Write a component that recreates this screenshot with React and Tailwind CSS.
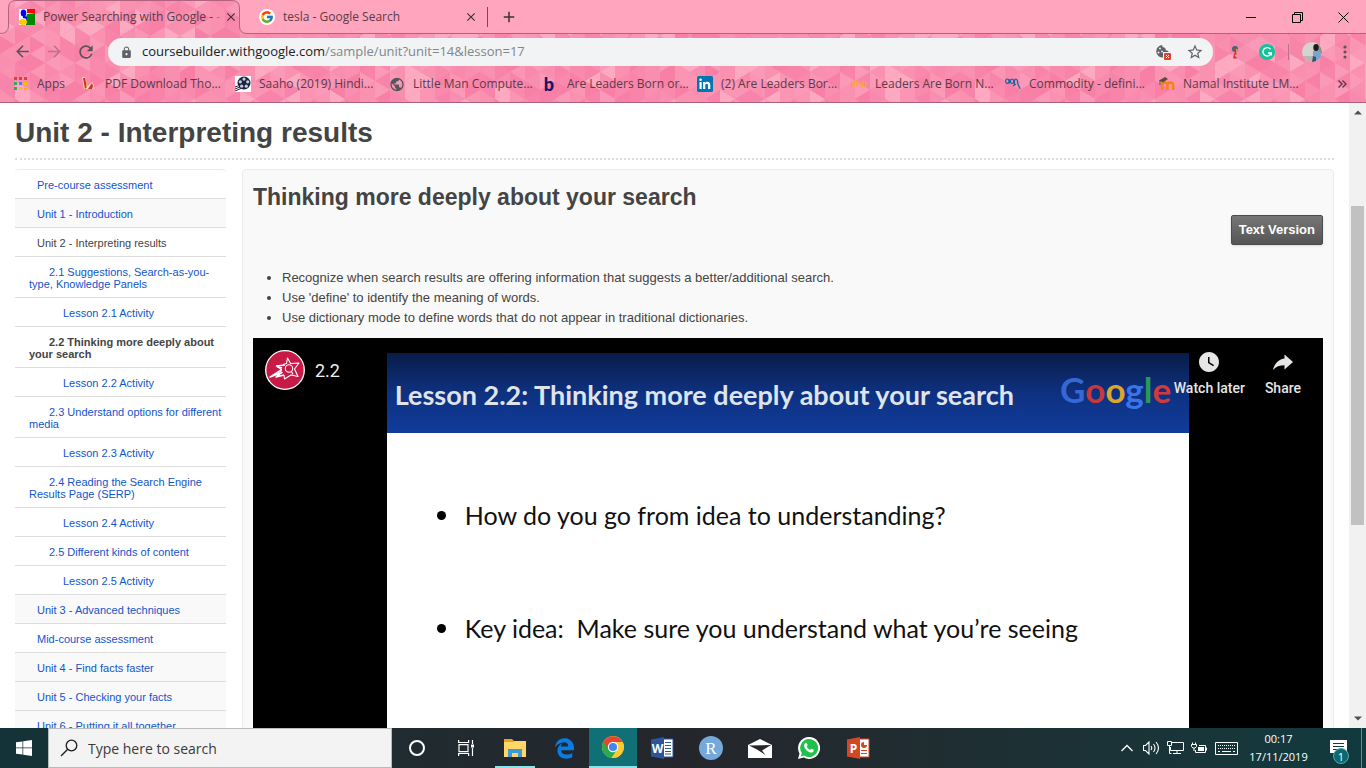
import React from "react";
import { FcGoogle } from "react-icons/fc";
import { FaEdgeLegacy } from "react-icons/fa6";
import { MdArrowBack, MdArrowForward, MdRefresh, MdLock, MdStarBorder, MdPublic, MdWatchLater, MdClose, MdAdd } from "react-icons/md";

const UI = "font-['Open_Sans','Noto_Sans',sans-serif]";

/* ---------- browser theme backdrop ---------- */

const SHADES = ["#f98fb0", "#f884aa", "#fb9ab8", "#f98aad", "#fb95b4", "#fca9c1", "#f87fa6", "#fa91b1"];

function themeTriangles() {
  const list = [];
  let seed = 7;
  const next = () => {
    seed = (seed * 1103515245 + 12345) % 2147483648;
    return SHADES[Math.floor((seed / 2147483648) * SHADES.length)];
  };
  for (let c = 0; c < 32; c++) {
    const x = c * 15;
    const shift = c % 2 ? -9 : 0;
    for (let r = -1; r < 8; r++) {
      const y = r * 18 + shift;
      list.push({ d: `M${x} ${y}L${x + 15} ${y + 9}L${x} ${y + 18}Z`, fill: next() });
      list.push({ d: `M${x + 15} ${y + 9}L${x} ${y + 18}L${x + 15} ${y + 27}Z`, fill: next() });
    }
  }
  return list;
}
const TRIANGLES = themeTriangles();

function ThemeBackdrop() {
  return (
    <svg className="absolute inset-0 h-full w-full" aria-hidden="true">
      <defs>
        <pattern id="tri" width="480" height="110" patternUnits="userSpaceOnUse">
          <rect width="480" height="110" fill="#f98bad" />
          {TRIANGLES.map((t, i) => (
            <path key={i} d={t.d} fill={t.fill} />
          ))}
        </pattern>
      </defs>
      <rect width="100%" height="100%" fill="url(#tri)" />
      <path
        d="M-2 -2H6000V33.500H247Q239.500 33.500 239.500 26V8Q239.500 0.500 232 0.500H16Q8.500 0.500 8.500 8V26Q8.500 33.500 0 33.500H-2Z"
        fill="#ffa6be"
        stroke="#b3627f"
      />
    </svg>
  );
}

/* ---------- small icons ---------- */

const OldGoogleIcon = () => (
  <svg width="16" height="16" viewBox="0 0 16 16">
    <path fill="#fff" d="M0 0h16v16H0z" />
    <path fill="#f00" d="M8 0h8v4H8z" />
    <path fill="#080" d="M8 5l8-1v12H7V8z" />
    <ellipse cx="4.500" cy="4" rx="2.800" ry="3.600" fill="#00f" />
    <path fill="#00f" d="M4 6l4 2v2L4 9z" />
    <ellipse cx="4" cy="13" rx="4" ry="3" fill="#fc0" />
  </svg>
);

const AppsIcon = () => (
  <svg width="16" height="16" viewBox="0 0 16 16">
    {["#e0403a", "#e0403a", "#e0403a", "#34a853", "#4285f4", "#fbbc05", "#34a853", "#fbbc05", "#fbbc05"].map((c, i) => (
      <rect key={i} x={1 + (i % 3) * 5} y={1 + Math.floor(i / 3) * 5} width="3" height="3" fill={c} />
    ))}
  </svg>
);

const PdfIcon = () => (
  <svg width="16" height="16" viewBox="0 0 16 16">
    <path d="M1 1l3 0 3 9 4-4 2 3-1 5-9 0z" fill="#f7cfc2" />
    <path d="M2 2l2 0 2 9-2 2zM7 13l4-6 1 3-1 3z" fill="#c9372c" />
    <path d="M5 5l2 4-2 3zM3 13h9v1H3z" fill="#e8a13a" />
  </svg>
);

const ReelIcon = () => (
  <svg width="16" height="16" viewBox="0 0 16 16">
    <path fill="#fff" d="M0 0h16v16H0z" />
    <circle cx="9" cy="7" r="6.500" fill="#1c2340" />
    <g fill="#c9cede">
      <circle cx="9" cy="3.100" r="1.600" />
      <circle cx="12.700" cy="5.800" r="1.600" />
      <circle cx="11.300" cy="10.200" r="1.600" />
      <circle cx="6.700" cy="10.200" r="1.600" />
      <circle cx="5.300" cy="5.800" r="1.600" />
    </g>
    <path d="M0 15l7-3M0 13l5-2M0 11l3-1" stroke="#1c2340" />
  </svg>
);

const LinkedInIcon = () => (
  <svg width="16" height="16" viewBox="0 0 16 16">
    <rect width="16" height="16" rx="1.500" fill="#0077b5" />
    <path d="M2.500 6h2.200v7H2.500zM6 6h2.200v1c.4-.7 1.200-1.200 2.300-1.200 2 0 2.800 1.300 2.800 3.300V13H11V9.500c0-1-.3-1.700-1.200-1.700S8.300 8.500 8.300 9.500V13H6z" fill="#fff" />
    <circle cx="3.600" cy="3.700" r="1.300" fill="#fff" />
  </svg>
);

const VocabIcon = () => (
  <svg width="17" height="16" viewBox="0 0 17 16" fill="none" stroke="#1565a8" strokeWidth="1.300">
    <ellipse cx="2.500" cy="5" rx="1.800" ry="2.300" />
    <ellipse cx="7.500" cy="5" rx="1.800" ry="2.300" />
    <path d="M4.700 3v4.500M10 8.500V5q.5-2.500 2-2t1.500 4.500l2.500 5.500M8.500 10l3-2" />
  </svg>
);

const MoodleIcon = () => (
  <svg width="16" height="16" viewBox="0 0 16 16">
    <path d="M3.200 14V9q0-2.500 2.500-2.500T8.500 9v5M8.500 14V9q0-2.500 2.800-2.500T14.200 9v5" fill="none" stroke="#f98012" strokeWidth="2.400" />
    <path d="M0 4.500l6-3.500 3 2-5 3.500z" fill="#5b4a3e" />
    <path d="M1 4v5" stroke="#5b4a3e" />
  </svg>
);

const CookieIcon = () => (
  <svg width="17" height="16" viewBox="0 0 17 16">
    <path d="M7 1A6.300 6.300 0 1 0 8 13.600V8h5.500q0-1.500-1.500-1.500T10.500 5 9 3.500 7 1z" fill="#5f6368" />
    <g fill="#f1f3f4">
      <circle cx="5" cy="4.500" r="1" />
      <circle cx="3.500" cy="8.500" r="1" />
      <circle cx="7" cy="7.500" r=".9" />
    </g>
    <rect x="9" y="9" width="7" height="7" rx="1" fill="#db4437" />
    <path d="M11 11l3 3M14 11l-3 3" stroke="#fff" />
  </svg>
);

const TrophyIcon = () => (
  <svg width="16" height="16" viewBox="0 0 16 16">
    <circle cx="8" cy="5" r="3" fill="#1f6f8b" />
    <path d="M6 3.500h2.500v3H6z" fill="#c9372c" />
    <path d="M8 7.500l2 2-2.500 2 3 3H6l1-4z" fill="#c9372c" />
    <path d="M9 4.500l2 1-2 3z" fill="#d9a441" />
  </svg>
);

const GrammarlyIcon = () => (
  <svg width="16" height="16" viewBox="0 0 16 16">
    <circle cx="8" cy="8" r="8" fill="#15c39a" />
    <path d="M11.500 5.200A4.200 4.200 0 1 0 12.200 9H9M12.300 8.500v3" fill="none" stroke="#fff" strokeWidth="1.400" />
  </svg>
);

const AvatarIcon = () => (
  <svg width="20" height="20" viewBox="0 0 20 20">
    <defs>
      <clipPath id="av">
        <circle cx="10" cy="10" r="10" />
      </clipPath>
    </defs>
    <g clipPath="url(#av)">
      <path d="M0 0h20v20H0z" fill="#d5d3cf" />
      <path d="M15 0h5v12h-5z" fill="#8b9687" />
      <path d="M0 14h12v6H0z" fill="#b9b6b2" />
      <path d="M11 9l5-1 3 3v9h-8z" fill="#7ea3cf" />
      <path d="M11 14l3 1v5h-4z" fill="#39506f" />
      <ellipse cx="14" cy="5.500" rx="2.700" ry="3.600" fill="#1d1a1c" />
    </g>
  </svg>
);

const BadgeStar = () => (
  <svg width="40" height="40" viewBox="0 0 40 40">
    <circle cx="20" cy="20" r="19.300" fill="#c81a46" stroke="#fff" strokeWidth="1.300" />
    <g fill="none" stroke="#fff" strokeWidth="1.100" strokeLinejoin="round">
      <path d="M18 14.500l3.500-1L22.500 8l3 5.500 8.500-.5-4.500 6 3.500 7.500-7-1.500-6.500 4-.5-4" />
      <circle cx="24" cy="18.500" r="3.700" />
      <path d="M26.500 21.500l1.500 3" />
      <path d="M20 15l-8.500 1 5 3.500L5 27l12-4.500-6 4.500 8-2" strokeWidth="1.400" />
      <path d="M12 16.500l5 1.500M8 25.500l9-5" strokeWidth="1.400" />
    </g>
  </svg>
);

const WindowsIcon = () => (
  <svg width="16" height="16" viewBox="0 0 16 16" fill="#fff">
    <path d="M0 2.300l6.500-.9v6.200H0zM7.200 1.300L16 0v7.600H7.200zM0 8.300h6.500v6.300L0 13.700zM7.200 8.300H16V16l-8.800-1.200z" />
  </svg>
);

const TaskViewIcon = () => (
  <svg width="18" height="16" viewBox="0 0 18 16" fill="none" stroke="#fff" strokeWidth="1.200">
    <path d="M2 4.600h9v7H2zM1.600 0v2.500h10V0M1.600 16v-2.500h10V16M15.500 0v4M15.500 8v8" />
    <path d="M14 4.500h3v3h-3z" fill="#fff" stroke="none" />
  </svg>
);

const FolderIcon = () => (
  <svg width="22" height="18" viewBox="0 0 22 18">
    <path d="M0 0h8l2 2h11v4H0z" fill="#e3a61b" />
    <path d="M0 3h9l2-1h11v16H0z" fill="#ffd766" />
    <path d="M4 10h14v8h-4v-4H8v4H4z" fill="#3f98d8" />
  </svg>
);

const ChromeIcon = () => (
  <svg width="22" height="22" viewBox="0 0 22 22">
    <circle cx="11" cy="11" r="11" fill="#fbc116" />
    <path d="M11 11L1.500 5.500A11 11 0 0 0 9.500 21.900L15.500 13z" fill="#2da94f" />
    <path d="M1.500 5.500A11 11 0 0 1 20.600 5.900H11L6.200 13.500z" fill="#ea4335" />
    <path d="M11 5.900h9.600A11 11 0 0 1 9.500 21.900l6-8.500z" fill="#fcc934" />
    <circle cx="11" cy="11" r="5.200" fill="#fff" />
    <circle cx="11" cy="11" r="4.100" fill="#4285f4" />
  </svg>
);

const OfficeIcon = ({ color, letter, children }) => (
  <svg width="23" height="22" viewBox="0 0 23 22">
    <path d="M12 2h10v18H12z" fill="#fff" stroke={color} />
    {children}
    <path d="M0 2.500L13 0v22L0 19.500z" fill={color} />
    <text x="6.500" y="15.500" textAnchor="middle" fontSize="12" fontWeight="700" fill="#fff" fontFamily="Open Sans">
      {letter}
    </text>
  </svg>
);

const MailIcon = () => (
  <svg width="24" height="19" viewBox="0 0 24 19">
    <path d="M0 6L12 0l12 6v13H0z" fill="#fff" />
    <path d="M1 6.500l22-.5-9 5.500 3.500 4.500L9 10.500z" fill="#24262a" />
  </svg>
);

const WhatsAppIcon = () => (
  <svg width="22" height="22" viewBox="0 0 22 22">
    <path d="M11 0a11 11 0 1 1-5.300 20.600L0 22l1.500-5.500A11 11 0 0 1 11 0z" fill="#fff" />
    <path d="M11 2a9 9 0 1 1-4.700 16.600L2.800 19.500l1-3.400A9 9 0 0 1 11 2z" fill="#1fc14b" />
    <path d="M7.700 5.800c.6-.2 1 0 1.200.6l.7 1.700c0 .6-.8 1-.9 1.500.7 1.500 1.900 2.600 3.400 3.200.5-.2 1-1.200 1.500-1.100l2 1c.5.600 0 2-.9 2.500-1.500.8-3.500.1-5-.9C8 13 6.300 10.800 6.100 9c0-1.300.7-2.700 1.600-3.200z" fill="#fff" />
  </svg>
);

/* ---------- browser chrome ---------- */

function Tab({ icon, children, active }) {
  return (
    <div className={active ? "flex h-full w-[240px] shrink-0 items-center pl-[19px]" : "flex h-full w-[247px] shrink-0 items-center pr-[7px] pl-[19px]"}>
      <span className="flex w-6 shrink-0">{icon}</span>
      <button className="min-w-0 flex-1 overflow-hidden text-left whitespace-nowrap">{children}</button>
      <button aria-label="Close tab" className="flex w-[18px] justify-center text-[#3d3337]">
        <MdClose size={14} />
      </button>
    </div>
  );
}

const BOOKMARKS = [
  ["PDF Download Tho...", <PdfIcon />],
  ["Saaho (2019) Hindi...", <ReelIcon />],
  ["Little Man Compute...", <MdPublic size={17} color="#54565b" />],
  ["Are Leaders Born or...", <span className="pr-1 font-['Lato',sans-serif] text-lg leading-none font-black text-[#1b1464]">b</span>],
  ["(2) Are Leaders Bor...", <LinkedInIcon />],
  ["Leaders Are Born N...", <span className="text-[8px] font-bold text-[#f9a63a]">PhD</span>],
  ["Commodity - defini...", <VocabIcon />],
  ["Namal Institute LM...", <MoodleIcon />],
];

function BrowserHeader() {
  return (
    <header className={`relative h-[103px] shrink-0 overflow-hidden border-b border-[#a8607b] ${UI}`}>
      <ThemeBackdrop />
      <div className="relative flex h-full flex-col">
        <div className="flex h-[34px] items-center text-[12px] text-[#5b3b47]">
          <Tab active icon={<OldGoogleIcon />}>
            Power Searching with Google - <span className="opacity-40">-</span>
          </Tab>
          <Tab
            icon={
              <span className="flex h-4 w-4 items-center justify-center rounded-full bg-white">
                <FcGoogle size={14} />
              </span>
            }
          >
            tesla - Google Search
          </Tab>
          <span className="h-5 w-px bg-[#7d4659]" />
          <button aria-label="New tab" className="ml-3 text-[#3d3337]">
            <MdAdd size={18} />
          </button>
          <div className="ml-auto flex h-7 text-black">
            <button aria-label="Minimize" className="flex w-[46px] items-center justify-center">
              <svg width="10" height="10" stroke="currentColor"><path d="M0 5.500h10" /></svg>
            </button>
            <button aria-label="Restore" className="flex w-[46px] items-center justify-center">
              <svg width="11" height="11" fill="none" stroke="currentColor"><path d="M.5 2.500h8v8h-8zM2.500 2.500v-2h8v8h-2" /></svg>
            </button>
            <button aria-label="Close" className="flex w-[46px] items-center justify-center">
              <svg width="11" height="11" stroke="currentColor"><path d="M.5 .5l10 10M10.500 .5l-10 10" /></svg>
            </button>
          </div>
        </div>

        <div className="flex h-9 items-center">
          <div className="flex w-[108px] shrink-0 pl-[6px] text-[#5b5358]">
            <button aria-label="Back" className="flex w-8 justify-center"><MdArrowBack size={19} /></button>
            <button aria-label="Forward" className="flex w-8 justify-center text-[#c0708c]"><MdArrowForward size={19} /></button>
            <button aria-label="Reload" className="flex w-8 justify-center"><MdRefresh size={20} /></button>
          </div>
          <div className="flex h-7 min-w-0 flex-1 items-center rounded-full bg-[#f1f3f4] pr-[9px] pl-3 text-[#5f6368]">
            <MdLock size={13} />
            <div className="ml-[9px] flex-1 text-[13px] whitespace-nowrap" role="textbox" aria-label="Address">
              <span className="text-[#202124]">coursebuilder.withgoogle.com</span>
              <span className="text-[#80868b]">/sample/unit?unit=14&amp;lesson=17</span>
            </div>
            <button aria-label="Cookies blocked" className="mr-[14px]"><CookieIcon /></button>
            <button aria-label="Bookmark this tab"><MdStarBorder size={18} /></button>
          </div>
          <div className="flex w-[153px] shrink-0 items-center pl-[14px]">
            <button aria-label="Extension" className="mr-4"><TrophyIcon /></button>
            <button aria-label="Grammarly"><GrammarlyIcon /></button>
            <span className="mx-[13px] h-4 w-px bg-[#c0708c]" />
            <button aria-label="Profile"><AvatarIcon /></button>
            <button aria-label="Menu" className="ml-[21px]">
              <svg width="4" height="14" fill="#5b5358"><circle cx="2" cy="2" r="1.600" /><circle cx="2" cy="7" r="1.600" /><circle cx="2" cy="12" r="1.600" /></svg>
            </button>
          </div>
        </div>

        <nav className="flex h-7 items-center pl-[13px] text-[12px] text-[#5b3b47]" aria-label="Bookmarks">
          <button className="flex w-[68px] shrink-0 items-center gap-2 whitespace-nowrap"><AppsIcon />Apps</button>
          {BOOKMARKS.map(([label, icon]) => (
            <a key={label} href="#bookmark" className="flex w-[154px] shrink-0 items-center gap-2 whitespace-nowrap">
              <span className="flex h-4 w-4 shrink-0 items-center justify-center">{icon}</span>
              {label}
            </a>
          ))}
          <button aria-label="More bookmarks" className="mr-[19px] ml-auto shrink-0">
            <svg width="9" height="8" fill="none" stroke="#5b3b47" strokeWidth="1.400"><path d="M.5 .5L4 4 .5 7.500M4.500 .5L8 4 4.500 7.500" /></svg>
          </button>
        </nav>
      </div>
    </header>
  );
}

/* ---------- course page ---------- */

const LESSONS = [
  ["Pre-course assessment", 1],
  ["Unit 1 - Introduction", 1, "shade"],
  ["Unit 2 - Interpreting results", 1, "current"],
  ["2.1 Suggestions, Search-as-you-type, Knowledge Panels", 2],
  ["Lesson 2.1 Activity", 3],
  ["2.2 Thinking more deeply about your search", 2, "bold"],
  ["Lesson 2.2 Activity", 3],
  ["2.3 Understand options for different media", 2],
  ["Lesson 2.3 Activity", 3],
  ["2.4 Reading the Search Engine Results Page (SERP)", 2],
  ["Lesson 2.4 Activity", 3],
  ["2.5 Different kinds of content", 2],
  ["Lesson 2.5 Activity", 3],
  ["Unit 3 - Advanced techniques", 1, "shade"],
  ["Mid-course assessment", 1],
  ["Unit 4 - Find facts faster", 1, "shade"],
  ["Unit 5 - Checking your facts", 1, "shade"],
  ["Unit 6 - Putting it all together", 1, "shade"],
];
const INDENT = { 1: "indent-2", 2: "indent-5", 3: "indent-[34px]" };
const TONE = {
  shade: "bg-[#f9f9f9] text-[#1155cc]",
  current: "text-[#444]",
  bold: "font-bold text-[#444]",
};

function Sidebar() {
  return (
    <nav aria-label="Course outline" className="w-[211px] shrink-0">
      <ul className="rounded border-t border-[#ebebeb] text-[11px] leading-3">
        {LESSONS.map(([label, level, tone]) => (
          <li key={label} className={`border-b border-[#ddd] pt-[9px] pr-1 pb-[7px] pl-[14px] ${INDENT[level]} ${TONE[tone] || "text-[#1155cc]"}`}>
            {tone === "current" || tone === "bold" ? label : <a href="#lesson">{label}</a>}
          </li>
        ))}
      </ul>
    </nav>
  );
}

function VideoPlayer() {
  return (
    <section aria-label="Lesson video" className="relative mt-[10px] aspect-video w-full overflow-hidden bg-black">
      <div className="mx-auto flex aspect-[4/3] h-full flex-col pt-[15px] font-['Lato',sans-serif]">
        <div className="flex h-20 items-center justify-between bg-gradient-to-b from-[#081c48] via-[#0e3180] to-[#113c9c] pt-1 pr-[18px] pl-2">
          <h3 className="text-[27px] leading-9 font-bold whitespace-nowrap text-[#dfe3ea]">Lesson 2.2: Thinking more deeply about your search</h3>
          <p aria-label="Google" className="pb-3 text-[35px] leading-10 font-bold whitespace-nowrap">
            <span className="text-[#3567d6]">G</span>
            <span className="text-[#c8373a]">o</span>
            <span className="text-[#dba72f]">o</span>
            <span className="text-[#3a74ea]">g</span>
            <span className="text-[#2c9a55]">l</span>
            <span className="text-[#d2393b]">e</span>
          </p>
        </div>
        <ul className="flex flex-1 flex-col gap-[77px] bg-white pt-16 pl-[50px] text-[25px] leading-9 text-[#111]">
          {["How do you go from idea to understanding?", "Key idea:\u00a0 Make sure you understand what you’re seeing"].map((t) => (
            <li key={t} className="flex items-center gap-[19px] whitespace-nowrap">
              <span className="h-[9px] w-[9px] rounded-full bg-black" />
              {t}
            </li>
          ))}
        </ul>
      </div>
      <div className="absolute top-3 left-3 flex items-center gap-[10px] font-['Roboto',sans-serif] text-[18px] text-[#eee]">
        <BadgeStar />
        <a href="#video">2.2</a>
      </div>
      <div className="absolute top-3 right-[22px] flex gap-5 font-['Roboto',sans-serif] text-[14px] leading-5 font-medium text-[#e6e6e6]">
        <button className="flex flex-col items-center gap-1">
          <MdWatchLater size={24} />
          Watch later
        </button>
        <button className="flex flex-col items-center gap-1">
          <svg width="24" height="24" viewBox="0 0 24 24" fill="currentColor">
            <path d="M13.500 8.500V4.500l8.500 7.500-8.500 7.500v-4.300c-5 0-8.500 1.300-11.500 4.800 1-5 4.500-10.500 11.500-11.500z" />
          </svg>
          Share
        </button>
      </div>
    </section>
  );
}

function CoursePage() {
  return (
    <main className="min-w-0 flex-1 overflow-hidden bg-white px-[15px] pt-3 font-['Liberation_Sans',Arial,sans-serif] text-[#444]">
      <h1 className="border-b-2 border-dotted border-[#ddd] pb-[7px] text-[28px] leading-9 font-bold">Unit 2 - Interpreting results</h1>
      <div className="mt-[9px] flex items-start gap-4">
        <Sidebar />
        <article className="min-w-0 flex-1 rounded border border-[#ebebeb] bg-[#f9f9f9] px-[10px] pt-[13px] pb-4">
          <h2 className="text-[23px] leading-7 font-bold">Thinking more deeply about your search</h2>
          <div className="mt-1 flex justify-end">
            <button className="h-[30px] rounded-[2px] border border-[#4c4c4c] bg-gradient-to-b from-[#777] to-[#555] px-[7px] text-[13px] font-bold text-white shadow-sm">
              Text Version
            </button>
          </div>
          <ul className="mt-[23px] list-disc pl-[29px] text-[13px] leading-5">
            <li>Recognize when search results are offering information that suggests a better/additional search.</li>
            <li>Use 'define' to identify the meaning of words.</li>
            <li>Use dictionary mode to define words that do not appear in traditional dictionaries.</li>
          </ul>
          <VideoPlayer />
        </article>
      </div>
    </main>
  );
}

function ScrollBar() {
  return (
    <div className="flex w-[17px] shrink-0 flex-col items-center bg-[#f1f1f1]" aria-hidden="true">
      <svg className="mt-[7px] shrink-0" width="8" height="5" fill="#505050"><path d="M0 4.500L4 .5l4 4z" /></svg>
      <div className="mt-[91px] h-[51%] w-[13px] bg-[#c1c1c1]" />
      <svg className="mt-auto mb-[7px] shrink-0" width="8" height="5" fill="#505050"><path d="M0 .5l4 4 4-4z" /></svg>
    </div>
  );
}

/* ---------- taskbar ---------- */

function TaskButton({ label, children, className = "" }) {
  return (
    <button aria-label={label} className={`flex h-full w-12 shrink-0 items-center justify-center ${className}`}>
      {children}
    </button>
  );
}

function Taskbar() {
  return (
    <footer className={`flex h-10 shrink-0 bg-gradient-to-r from-[#143338] via-[#24262b] to-[#103a3e] text-white ${UI}`}>
      <TaskButton label="Start"><WindowsIcon /></TaskButton>
      <label className="flex w-[344px] items-center gap-[10px] border border-[#b9bbbb] bg-[#f2f3f2] pl-[11px]">
        <svg width="18" height="18" viewBox="0 0 18 18" fill="none" stroke="#1b1b1b" strokeWidth="1.300">
          <circle cx="11.500" cy="6.500" r="5.300" />
          <path d="M7.700 10.300L1 17" />
        </svg>
        <input
          type="text"
          aria-label="Search"
          placeholder="Type here to search"
          className="min-w-0 flex-1 bg-transparent text-[14px] text-[#333] outline-none placeholder:text-[#3b3b3b]"
        />
      </label>
      <div className="flex gap-px pl-px">
        <TaskButton label="Cortana"><span className="h-4 w-4 rounded-full border-2 border-white" /></TaskButton>
        <TaskButton label="Task view"><TaskViewIcon /></TaskButton>
        <TaskButton label="File Explorer" className="relative">
          <FolderIcon />
          <span className="absolute bottom-0 left-1 h-[2px] w-10 bg-[#8be3ea]" />
        </TaskButton>
        <TaskButton label="Edge"><FaEdgeLegacy size={21} color="#0a7be0" /></TaskButton>
        <TaskButton label="Chrome" className="border-b-2 border-[#8be3ea] bg-[#117075]"><ChromeIcon /></TaskButton>
        <TaskButton label="Word">
          <OfficeIcon color="#2b579a" letter="W">
            <path d="M14 5.500h6M14 8.500h6M14 11.500h6M14 14.500h6M14 17h6" stroke="#2b579a" />
          </OfficeIcon>
        </TaskButton>
        <TaskButton label="R">
          <span className="flex h-6 w-6 items-center justify-center rounded-full bg-[#75a9db] font-['Liberation_Serif',serif] text-[17px] leading-none">R</span>
        </TaskButton>
        <TaskButton label="Mail"><MailIcon /></TaskButton>
        <TaskButton label="WhatsApp"><WhatsAppIcon /></TaskButton>
        <TaskButton label="PowerPoint">
          <OfficeIcon color="#d24726" letter="P">
            <circle cx="17" cy="8" r="3" fill="#d24726" />
            <path d="M17 8V5h3v3z" fill="#fff" />
            <path d="M14 13.500h6M14 16.500h6" stroke="#d24726" />
          </OfficeIcon>
        </TaskButton>
      </div>

      <div className="ml-auto flex items-center">
        <button aria-label="Show hidden icons" className="flex w-6 justify-center">
          <svg width="12" height="8" fill="none" stroke="#fff" strokeWidth="1.300"><path d="M.5 7L6 1.500 11.500 7" /></svg>
        </button>
        <button aria-label="Volume" className="flex w-6 justify-center">
          <svg width="17" height="14" fill="none" stroke="#fff" strokeWidth="1.100">
            <path d="M.5 4.500h2l3.500-3.500v12l-3.500-3.500h-2zM8 5q1.500 2 0 4M10.500 3q3 4 0 8M13 1q5 6 0 12" />
          </svg>
        </button>
        <button aria-label="Network" className="flex w-6 justify-center">
          <svg width="17" height="14" fill="none" stroke="#fff">
            <path d="M5 1.500h11.500v8H3.500V6M10 9.500v3M6 12.500h8M.5 .5h4v4h-4zM2.500 4.500v8h2" />
          </svg>
        </button>
        <button aria-label="Battery" className="flex w-6 justify-center">
          <svg width="17" height="13" fill="none" stroke="#fff">
            <path d="M8 3.500h6.500v7h-10V8M15.500 5.500v3M1.500 .5v2M4.500 .5v2M.5 2.500h5v2l-1.500 1.500h-2L.5 4.500zM3 6v3" />
            <path d="M7 5h6v4H7z" fill="#fff" stroke="none" />
          </svg>
        </button>
        <button aria-label="Touch keyboard" className="flex w-[31px] justify-center">
          <svg width="23" height="13" fill="none" stroke="#fff">
            <path d="M.5 .5h22v12H.5z" />
            <path d="M3 3.500h17M3 6.500h17" strokeDasharray="1 1" />
            <path d="M3 9.500h2M7 9.500h9M18 9.500h2" />
          </svg>
        </button>
        <time className="flex w-[73px] flex-col items-center text-[11px] leading-[18px]">
          <span>00:17</span>
          <span>17/11/2019</span>
        </time>
        <button aria-label="Notifications" className="relative flex h-10 w-[46px] items-center justify-center">
          <svg width="17" height="17" viewBox="0 0 17 17">
            <path d="M0 0h17v13H9l-4 4v-4H0z" fill="#fff" />
            <path d="M3 3.500h11M3 6.500h11M3 9.500h8" stroke="#143a3e" />
          </svg>
          <span className="absolute right-3 bottom-1 flex h-4 w-4 items-center justify-center rounded-full border border-[#5fa3a8] bg-[#0b6a70] text-[11px] leading-none">1</span>
        </button>
        <span className="mr-1 h-10 w-px bg-[#71898b]" />
      </div>
    </footer>
  );
}

export default function App() {
  return (
    <div className="flex h-screen flex-col overflow-hidden">
      <BrowserHeader />
      <div className="flex min-h-0 flex-1">
        <CoursePage />
        <ScrollBar />
      </div>
      <Taskbar />
    </div>
  );
}
